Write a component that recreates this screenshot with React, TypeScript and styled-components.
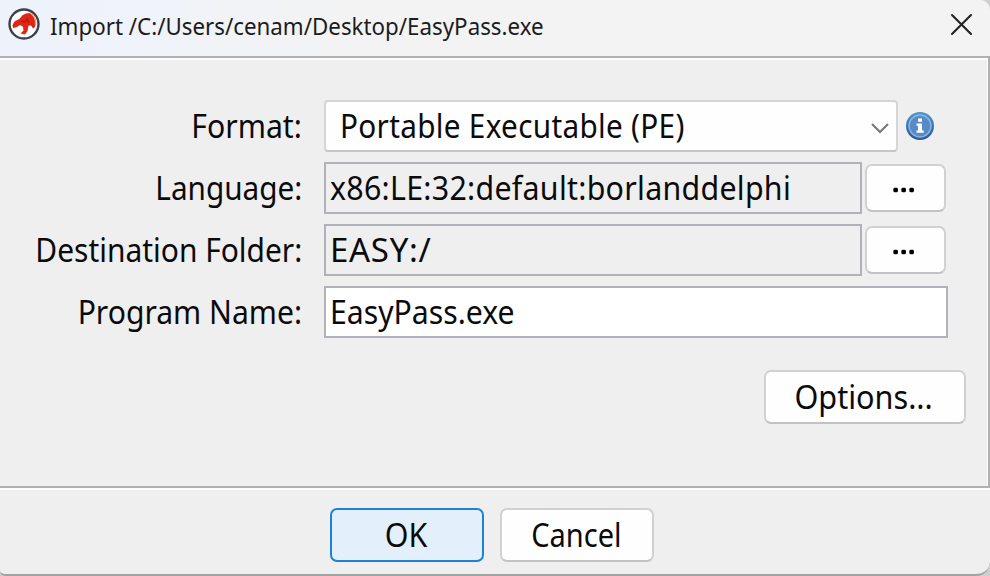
import React from "react";
import styled, { createGlobalStyle } from "styled-components";

const GlobalStyle = createGlobalStyle`
  * { box-sizing: border-box; }
  body { margin: 0; background: #cfcfcf; overflow: hidden; }
`;

const Dialog = styled.main`
  width: 990px;
  height: 576px;
  display: flex;
  flex-direction: column;
  background: #efefef;
  border-bottom: 2px solid #a2a2a2;
  border-radius: 0 10px 14px 5px;
  overflow: hidden;
  color: #0b0b0b;
  font: 33px/50px "Noto Sans", "Open Sans", sans-serif;
`;

const TitleBar = styled.header`
  height: 56px;
  flex: none;
  display: flex;
  align-items: flex-start;
  padding: 7px 17px 0 7px;
  background: linear-gradient(100deg, #eef2fb 0%, #f0f3fa 15%, #f3f3f4 34%, #f3f3f3 100%);
`;

const Title = styled.h1`
  flex: 1;
  margin: 1px 0 0 9px;
  font-size: 24px;
  font-weight: 400;
  line-height: 36px;
  color: #1c1c1c;
`;

const CloseButton = styled.button`
  width: 24px;
  height: 24px;
  margin-top: 5px;
  padding: 0;
  border: 0;
  background: none;
  display: flex;
`;

const Content = styled.section`
  height: 432px;
  flex: none;
  display: flex;
  flex-direction: column;
  border: 2px solid #b1b1b3;
  border-left: 0;
  box-shadow: inset -1px 2px #fcfcfc, 0 2px #fcfcfc;
  padding: 42px 22px 0 0;
`;

const FormRow = styled.div`
  height: 62px;
  display: grid;
  grid-template-columns: 302px auto;
  column-gap: 22px;
`;

const Label = styled.label`
  height: 52px;
  padding-top: 1px;
  text-align: right;
`;

const Controls = styled.div`
  display: flex;
  gap: 3px;
`;

const Fit = styled.span<{ $scale: number; $from?: string; $spacing?: number }>`
  display: inline-block;
  white-space: nowrap;
  letter-spacing: ${(p) => p.$spacing ?? 0}px;
  transform: scaleX(${(p) => p.$scale});
  transform-origin: ${(p) => p.$from ?? "left"} center;
`;

const Field = styled.div<{ $width: number; $editable?: boolean }>`
  width: ${(p) => p.$width}px;
  height: 52px;
  border: 2px solid #b0b1b9;
  background: ${(p) => (p.$editable ? "#fff" : "#efefef")};
  padding-left: 4px;
  line-height: 48px;
`;

const Select = styled.div`
  width: 574px;
  height: 52px;
  display: flex;
  align-items: center;
  justify-content: space-between;
  border: 2px solid #d5d5d5;
  border-bottom-color: #c6c6c6;
  border-radius: 4px;
  background: #fefefe;
  padding: 0 6px 0 14px;
  line-height: 48px;
`;

const SelectArrow = styled.svg`
  margin-top: 3px;
`;

const InfoIcon = styled.svg`
  margin: 11px 0 0 4px;
`;

const Button = styled.button<{ $width: number; $height?: number; $primary?: boolean }>`
  width: ${(p) => p.$width}px;
  height: ${(p) => p.$height ?? 54}px;
  flex: none;
  display: flex;
  align-items: center;
  justify-content: center;
  padding: 0 2px 0 0;
  border: 2px solid ${(p) => (p.$primary ? "#1c82d5" : "#d1d1d1")};
  border-bottom-color: ${(p) => (p.$primary ? "#1c82d5" : "#c2c2c2")};
  border-radius: 7px;
  background: ${(p) => (p.$primary ? "#e3f0fb" : "#fefefe")};
  color: #0b0b0b;
  font: inherit;
  line-height: 50px;
`;

const BrowseButton = styled(Button)`
  margin-top: 2px;
  padding: 3px 3px 0 0;
`;

const OptionsBar = styled.div`
  display: flex;
  justify-content: flex-end;
  margin-top: 22px;
`;

const Footer = styled.footer`
  display: flex;
  justify-content: center;
  gap: 16px;
  padding: 20px 6px 0 0;
`;

const AppIcon = () => (
  <svg width="34" height="34" viewBox="0 0 34 34" aria-hidden="true">
    <circle cx="17" cy="17" r="14.5" fill="#fff" stroke="#3e4045" strokeWidth="2.4" />
    <path
      d="M5.5 18 7.5 14.5 13 11.5 15.4 8.2 19 6.5 22.5 6 25 7.5C28 10.5 29.5 15 28 20L26 21.5 24 18.5 21.5 18.8 20.5 24 18 27.5 13.5 26.5 16.5 23.5 16 19.8 13 18 9.5 20.3 6 21Z"
      fill="#df2516"
    />
    <path d="m14 14 4 1 2-3 2 4" fill="none" stroke="#b61512" strokeWidth="1.2" />
    <path d="M24.5 6.8C27.5 9.5 29 13 28.6 17.5" fill="none" stroke="#f3a06c" strokeWidth="1.4" />
  </svg>
);

const BrowseDots = () => (
  <svg width="24" height="6" viewBox="0 0 24 6" aria-hidden="true">
    <rect x="1.4" y=".8" width="4.5" height="4.5" rx="1.4" />
    <rect x="9.4" y=".8" width="4.5" height="4.5" rx="1.4" />
    <rect x="17.4" y=".8" width="4.5" height="4.5" rx="1.4" />
  </svg>
);

export default function App() {
  return (
    <>
      <GlobalStyle />
      <Dialog>
        <TitleBar>
          <AppIcon />
          <Title><Fit $scale={0.93}>Import /C:/Users/cenam/Desktop/EasyPass.exe</Fit></Title>
          <CloseButton aria-label="Close">
            <svg width="24" height="24" viewBox="0 0 24 24">
              <path d="M3 3 22 22M22 3 3 22" stroke="#222" strokeWidth="2.1" strokeLinecap="round" />
            </svg>
          </CloseButton>
        </TitleBar>
        <Content>
          <FormRow>
            <Label><Fit $scale={0.915} $from="right">Format:</Fit></Label>
            <Controls>
              <Select>
                <Fit $scale={0.9} $spacing={0.35}>Portable Executable (PE)</Fit>
                <SelectArrow width="20" height="12" viewBox="0 0 20 12">
                  <path d="m2 2 8 8 8-8" fill="none" stroke="#767676" strokeWidth="2" />
                </SelectArrow>
              </Select>
              <InfoIcon width="30" height="30" viewBox="0 0 30 30">
                <defs>
                  <linearGradient id="infoBlue" x1="0" y1="0" x2="0" y2="1">
                    <stop stopColor="#4d97cc" />
                    <stop offset="1" stopColor="#2756a0" />
                  </linearGradient>
                </defs>
                <circle cx="15" cy="15" r="14" fill="url(#infoBlue)" />
                <circle cx="15" cy="15" r="11" fill="#588bc6" stroke="#8eb6dd" strokeWidth="1.4" />
                <path d="M13 7.5h4v3.3h-4zM11.5 12.5H17v7h1.8v2.3h-7.3v-2.3H13v-4.7h-1.5z" fill="#fff" />
              </InfoIcon>
            </Controls>
          </FormRow>
          <FormRow>
            <Label><Fit $scale={0.9} $from="right">Language:</Fit></Label>
            <Controls>
              <Field $width={538}><Fit $scale={0.92} $spacing={0.3}>x86:LE:32:default:borlanddelphi</Fit></Field>
              <BrowseButton $width={81} $height={48} aria-label="Browse languages"><BrowseDots /></BrowseButton>
            </Controls>
          </FormRow>
          <FormRow>
            <Label><Fit $scale={0.907} $from="right">Destination Folder:</Fit></Label>
            <Controls>
              <Field $width={538}><Fit $scale={1} $spacing={0.7}>EASY:/</Fit></Field>
              <BrowseButton $width={81} $height={48} aria-label="Browse folders"><BrowseDots /></BrowseButton>
            </Controls>
          </FormRow>
          <FormRow>
            <Label><Fit $scale={0.912} $from="right">Program Name:</Fit></Label>
            <Controls>
              <Field $width={624} $editable><Fit $scale={0.915}>EasyPass.exe</Fit></Field>
            </Controls>
          </FormRow>
          <OptionsBar>
            <Button $width={202}><Fit $scale={0.927} $from="center">Options...</Fit></Button>
          </OptionsBar>
        </Content>
        <Footer>
          <Button $width={154} $primary><Fit $scale={0.92} $from="center">OK</Fit></Button>
          <Button $width={154}><Fit $scale={0.88} $from="center">Cancel</Fit></Button>
        </Footer>
      </Dialog>
    </>
  );
}
